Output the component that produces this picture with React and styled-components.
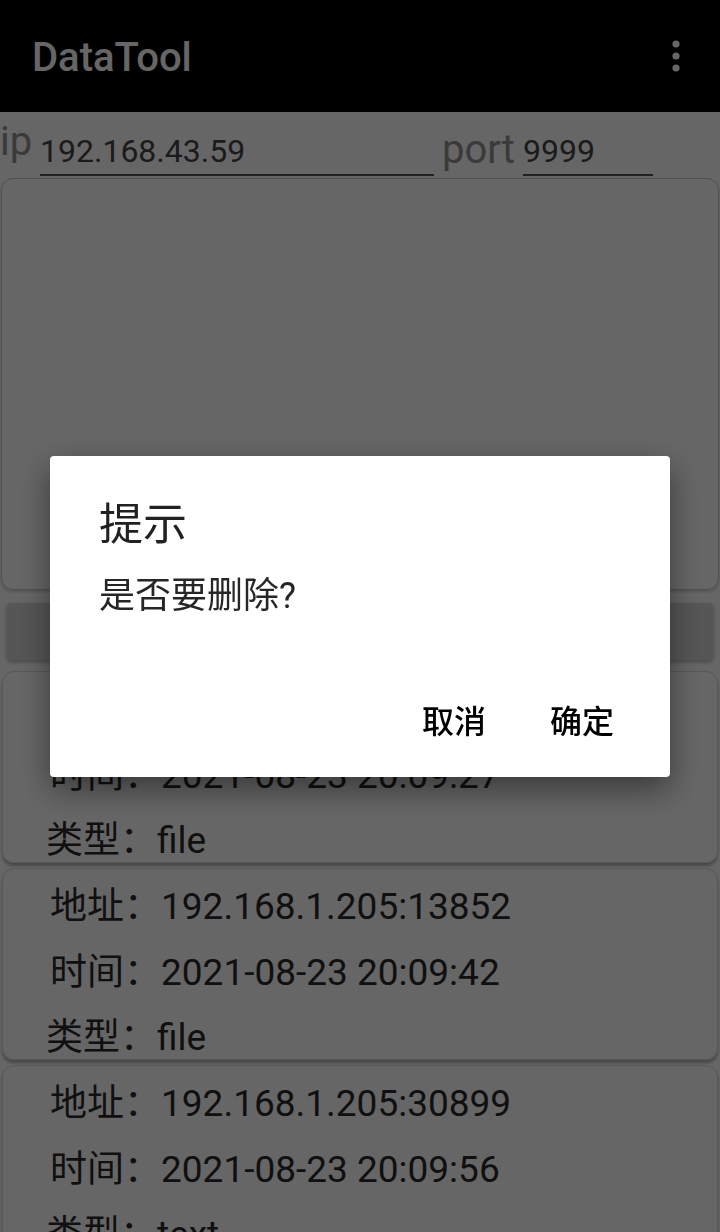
import React from 'react';
import styled, { createGlobalStyle } from "styled-components";

const GlobalStyle = createGlobalStyle`
html, body {
  margin: 0;
  padding: 0;
  background: #ffffff;
  overflow: hidden;
}
body {
  font-family: Roboto, "Noto Sans CJK SC", sans-serif;
}
`

const Screen = styled.div`
position: relative;
width: 720px;
height: 1232px;
overflow: hidden;
background: #ffffff;
`

const Toolbar = styled.header`
display: flex;
align-items: center;
justify-content: space-between;
height: 112px;
padding: 0 40px 0 32px;
box-sizing: border-box;
background: #000000;
`

const Title = styled.h1`
margin: 4px 0 0;
font-size: 40px;
line-height: 40px;
font-weight: 500;
color: #ffffff;
`

const AddressRow = styled.div`
display: flex;
align-items: flex-start;
height: 66px;
`

const Label = styled.span`
width: ${p => p.$w}px;
margin-left: ${p => p.$left || 0}px;
margin-top: ${p => p.$top}px;
font-size: 40px;
line-height: 40px;
color: #929292;
`

const Field = styled.div`
display: flex;
align-items: flex-end;
width: ${p => p.$w}px;
height: 64px;
box-sizing: border-box;
padding-bottom: 7px;
border-bottom: 2px solid #555555;
font-size: 32px;
line-height: 32px;
color: #444444;
`

const LogBox = styled.div`
height: 412px;
margin: 0 1px;
box-sizing: border-box;
border: 1px solid #c8c8c8;
border-radius: 12px;
box-shadow: 0 2px 3px rgba(0,0,0,0.18);
`

const WideButton = styled.div`
height: 57px;
margin: 13px 7px 0;
background: #d6d6d6;
border-radius: 4px;
box-shadow: 0 2px 4px rgba(0,0,0,0.3);
`

const RecordList = styled.div`
display: flex;
flex-direction: column;
gap: 5px;
padding: 11px 2px 0;
`

const Card = styled.div`
flex: none;
height: 192px;
box-sizing: border-box;
border: 1px solid #dcdcdc;
border-radius: 12px;
box-shadow: 0 3px 3px rgba(0,0,0,0.3);
`

const Line = styled.div`
height: 46px;
margin-top: ${p => p.$top}px;
padding-left: ${p => p.$indent}px;
font-size: 37px;
line-height: 46px;
color: #2a2a2a;
white-space: nowrap;
`

const Scrim = styled.div`
position: fixed;
inset: 0;
display: flex;
align-items: center;
justify-content: center;
background: rgba(0,0,0,0.6);
`

const Dialog = styled.div`
width: 620px;
height: 321px;
box-sizing: border-box;
padding: 39px 0 0;
background: #ffffff;
border-radius: 4px;
box-shadow: 0 12px 32px rgba(0,0,0,0.45);
`

const DialogTitle = styled.div`
padding-left: 49px;
font-size: 44px;
line-height: 60px;
color: #212121;
`

const DialogMessage = styled.div`
margin-top: 19px;
padding-left: 49px;
font-size: 36px;
line-height: 44px;
color: #262626;
`

const DialogActions = styled.div`
display: flex;
justify-content: flex-end;
gap: 32px;
margin-top: 65px;
padding-right: 40px;
`

const DialogButton = styled.button`
height: 72px;
padding: 0 16px;
border: none;
background: none;
font-family: inherit;
font-size: 32px;
font-weight: 500;
color: #000000;
`

const records = [
  { addr: "192.168.1.205:13727", time: "2021-08-23 20:09:27", type: "file" },
  { addr: "192.168.1.205:13852", time: "2021-08-23 20:09:42", type: "file" },
  { addr: "192.168.1.205:30899", time: "2021-08-23 20:09:56", type: "text" },
]

function Dots() {
  return (
    <svg width="8" height="32" viewBox="0 0 8 32">
      <circle cx="4" cy="4" r="3.6" fill="#ffffff" />
      <circle cx="4" cy="16" r="3.6" fill="#ffffff" />
      <circle cx="4" cy="28" r="3.6" fill="#ffffff" />
    </svg>
  )
}

export default function App() {
  return (
    <Screen>
      <GlobalStyle />
      <Toolbar>
        <Title>DataTool</Title>
        <Dots />
      </Toolbar>

      <AddressRow>
        <Label $w={40} $top={10}>ip</Label>
        <Field $w={394}>192.168.43.59</Field>
        <Label $w={81} $left={8} $top={18}>port</Label>
        <Field $w={130}>9999</Field>
      </AddressRow>

      <LogBox />
      <WideButton />

      <RecordList>
        {records.map((r, i) => (
          <Card key={i}>
            <Line $top={15} $indent={47}>地址：{r.addr}</Line>
            <Line $top={20} $indent={47}>时间：{r.time}</Line>
            <Line $top={19} $indent={43}>类型：{r.type}</Line>
          </Card>
        ))}
      </RecordList>

      <Scrim>
        <Dialog>
          <DialogTitle>提示</DialogTitle>
          <DialogMessage>是否要删除?</DialogMessage>
          <DialogActions>
            <DialogButton>取消</DialogButton>
            <DialogButton>确定</DialogButton>
          </DialogActions>
        </Dialog>
      </Scrim>
    </Screen>
  )
}
